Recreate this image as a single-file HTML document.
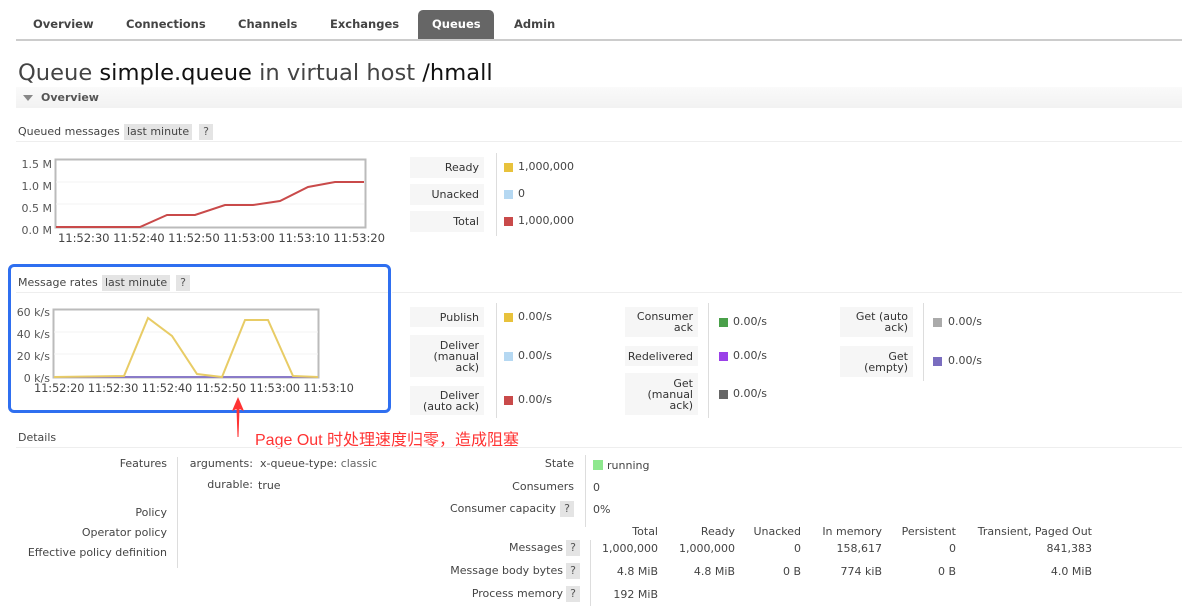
<!DOCTYPE html>
<html><head><meta charset="utf-8"><style>
*{margin:0;padding:0;box-sizing:border-box}
body{width:1182px;height:606px;background:#fff;position:relative;overflow:hidden;font-family:"DejaVu Sans","Liberation Sans","Noto Sans CJK SC",sans-serif;font-size:11px;color:#444}
.a{position:absolute;white-space:nowrap}
.r{text-align:right}
.tab{position:absolute;top:17px;font-weight:bold;font-size:11.5px;color:#444}
.lb{position:absolute;background:#f6f6f6;text-align:right;padding-right:5px;font-size:11px;line-height:11px;color:#333;display:flex;flex-direction:column;justify-content:center;align-items:flex-end}
.sw{position:absolute;width:9px;height:9px}
.q{position:absolute;background:#e4e4e4;width:14px;height:16px;text-align:center;line-height:16px;color:#555}
.hl{position:absolute;height:1px;background:#eee}
.vl{position:absolute;width:1px;background:#ddd}
</style></head><body>
<div class="tab" style="left:33px">Overview</div>
<div class="tab" style="left:126px">Connections</div>
<div class="tab" style="left:238px">Channels</div>
<div class="tab" style="left:330px">Exchanges</div>
<div class="a" style="left:418px;top:10px;width:76px;height:30px;background:#666;border-radius:5px 5px 0 0"></div>
<div class="tab" style="left:432px;color:#fff">Queues</div>
<div class="tab" style="left:514px">Admin</div>
<div class="a" style="left:16px;top:39px;width:1166px;height:2px;background:#ccc"></div>

<div class="a" style="left:18px;top:60px;font-size:22.6px;color:#444">Queue <span style="color:#111">simple.queue</span> in virtual host <span style="color:#111">/hmall</span></div>
<div class="a" style="left:16px;top:87px;width:1166px;height:21px;background:linear-gradient(#fafafa,#f2f2f2)"></div>
<div class="a" style="left:23px;top:95px;width:0;height:0;border-left:5px solid transparent;border-right:5px solid transparent;border-top:6px solid #888"></div>
<div class="a" style="left:41px;top:91px;font-weight:bold;color:#555">Overview</div>

<div class="a" style="left:18px;top:125px">Queued messages</div>
<div class="a" style="left:124px;top:124px;background:#e4e4e4;padding:1px 3px;height:16px">last minute</div>
<div class="q" style="left:199px;top:124px">?</div>
<div class="hl" style="left:16px;top:141px;width:1166px"></div>

<svg class="a" style="left:0;top:0" width="400" height="250">
<rect x="55.5" y="159.5" width="310" height="68" fill="#fff" stroke="#bbb" stroke-width="2"/>
<line x1="56" y1="182" x2="364" y2="182" stroke="#f3f3f3"/><line x1="56" y1="204" x2="364" y2="204" stroke="#f3f3f3"/>
<polyline fill="none" stroke="#c94a4a" stroke-width="2" points="56,227 140,227 167,215 195,215 225,205 253,205 280,201 308,187 335,182 364,182"/>
</svg>
<div class="a r" style="left:4px;top:154px;width:48px;line-height:22px;color:#555">1.5 M<br>1.0 M<br>0.5 M<br>0.0 M</div>
<div class="a" style="left:58px;top:231px;font-size:11.65px;color:#444;letter-spacing:-.1px">11:52:30 11:52:40 11:52:50 11:53:00 11:53:10 11:53:20</div>

<div class="lb" style="left:410px;top:157px;width:74px;height:21px">Ready</div>
<div class="lb" style="left:410px;top:184px;width:74px;height:21px">Unacked</div>
<div class="lb" style="left:410px;top:211px;width:74px;height:21px">Total</div>
<div class="vl" style="left:496px;top:153px;height:83px"></div>
<div class="sw" style="left:504px;top:163px;background:#e8c23c"></div><div class="a" style="left:518px;top:160px">1,000,000</div>
<div class="sw" style="left:504px;top:190px;background:#b5d8f2"></div><div class="a" style="left:518px;top:187px">0</div>
<div class="sw" style="left:504px;top:217px;background:#c94a4a"></div><div class="a" style="left:518px;top:214px">1,000,000</div>

<div class="a" style="left:8px;top:264px;width:383px;height:149px;border:3px solid #2f6ff0;border-radius:6px"></div>
<div class="a" style="left:18px;top:276px">Message rates</div>
<div class="a" style="left:102px;top:275px;background:#e4e4e4;padding:1px 3px;height:16px">last minute</div>
<div class="q" style="left:176px;top:275px">?</div>
<div class="hl" style="left:392px;top:292px;width:790px"></div>
<div class="hl" style="left:16px;top:292px;width:372px"></div>

<svg class="a" style="left:0;top:0" width="400" height="400">
<rect x="53.5" y="309.5" width="265" height="68" fill="#fff" stroke="#bbb" stroke-width="2"/>
<line x1="54" y1="332" x2="318" y2="332" stroke="#f3f3f3"/><line x1="54" y1="354" x2="318" y2="354" stroke="#f3f3f3"/>
<line x1="54" y1="377" x2="318" y2="377" stroke="#8a7bc8" stroke-width="2"/>
<polyline fill="none" stroke="#e8cc66" stroke-width="2" points="54,377 124,376 148,318 172,336 197,374 222,377 245,320 268,320 293,376 318,377"/>
</svg>
<div class="a r" style="left:2px;top:302px;width:48px;line-height:22px;color:#555">60 k/s<br>40 k/s<br>20 k/s<br>0 k/s</div>
<div class="a" style="left:34px;top:381px;font-size:11.4px;color:#444;letter-spacing:-.1px">11:52:20 11:52:30 11:52:40 11:52:50 11:53:00 11:53:10</div>

<div class="lb" style="left:410px;top:307px;width:74px;height:20px">Publish</div>
<div class="lb" style="left:410px;top:335px;width:74px;height:42px">Deliver<br>(manual<br>ack)</div>
<div class="lb" style="left:410px;top:386px;width:74px;height:29px">Deliver<br>(auto ack)</div>
<div class="vl" style="left:496px;top:303px;height:115px"></div>
<div class="sw" style="left:504px;top:313px;background:#e8c23c"></div><div class="a" style="left:518px;top:310px">0.00/s</div>
<div class="sw" style="left:504px;top:352px;background:#b5d8f2"></div><div class="a" style="left:518px;top:349px">0.00/s</div>
<div class="sw" style="left:504px;top:396px;background:#c94a4a"></div><div class="a" style="left:518px;top:393px">0.00/s</div>

<div class="lb" style="left:625px;top:307px;width:73px;height:30px">Consumer<br>ack</div>
<div class="lb" style="left:625px;top:346px;width:73px;height:20px">Redelivered</div>
<div class="lb" style="left:625px;top:373px;width:73px;height:42px">Get<br>(manual<br>ack)</div>
<div class="vl" style="left:708px;top:303px;height:115px"></div>
<div class="sw" style="left:719px;top:318px;background:#4aa04a"></div><div class="a" style="left:733px;top:315px">0.00/s</div>
<div class="sw" style="left:719px;top:352px;background:#9a40e8"></div><div class="a" style="left:733px;top:349px">0.00/s</div>
<div class="sw" style="left:719px;top:390px;background:#666"></div><div class="a" style="left:733px;top:387px">0.00/s</div>

<div class="lb" style="left:840px;top:307px;width:73px;height:30px">Get (auto<br>ack)</div>
<div class="lb" style="left:840px;top:346px;width:73px;height:31px">Get<br>(empty)</div>
<div class="vl" style="left:923px;top:303px;height:78px"></div>
<div class="sw" style="left:933px;top:318px;background:#aaa"></div><div class="a" style="left:948px;top:315px">0.00/s</div>
<div class="sw" style="left:933px;top:357px;background:#7a6dbf"></div><div class="a" style="left:948px;top:354px">0.00/s</div>

<svg class="a" style="left:228px;top:395px" width="20" height="44"><path d="M10 2 L16 16 L11.5 14 L10.5 42 L9.5 42 L8.5 14 L4 16 Z" fill="#f33"/></svg>
<div class="a" style="left:255px;top:426px;font-size:16px;color:#f33;font-family:'Liberation Sans','Noto Sans CJK SC',sans-serif">Page Out 时处理速度归零，造成阻塞</div>

<div class="a" style="left:18px;top:431px">Details</div>
<div class="hl" style="left:16px;top:447px;width:1166px"></div>

<div class="a r" style="left:0;top:457px;width:167px">Features</div>
<div class="a r" style="left:0;top:506px;width:167px">Policy</div>
<div class="a r" style="left:0;top:526px;width:167px">Operator policy</div>
<div class="a r" style="left:0;top:546px;width:167px">Effective policy definition</div>
<div class="vl" style="left:177px;top:457px;height:111px"></div>
<div class="a r" style="left:150px;top:457px;width:103px">arguments:</div>
<div class="a" style="left:260px;top:457px">x-queue-type: <span style="color:#666">classic</span></div>
<div class="a r" style="left:150px;top:478px;width:103px">durable:</div>
<div class="a" style="left:258px;top:479px">true</div>

<div class="a r" style="left:400px;top:457px;width:174px">State</div>
<div class="a r" style="left:400px;top:480px;width:174px">Consumers</div>
<div class="a r" style="left:400px;top:502px;width:156px">Consumer capacity</div>
<div class="q" style="left:560px;top:501px">?</div>
<div class="vl" style="left:585px;top:455px;height:72px"></div>
<div class="sw" style="left:593px;top:460px;background:#8ee88e;width:10px;height:10px"></div><div class="a" style="left:607px;top:459px">running</div>
<div class="a" style="left:593px;top:481px">0</div>
<div class="a" style="left:593px;top:503px">0%</div>

<div class="a r" style="left:580px;top:525px;width:78px">Total</div>
<div class="a r" style="left:660px;top:525px;width:75px">Ready</div>
<div class="a r" style="left:740px;top:525px;width:61px">Unacked</div>
<div class="a r" style="left:800px;top:525px;width:82px">In memory</div>
<div class="a r" style="left:880px;top:525px;width:76px">Persistent</div>
<div class="a r" style="left:960px;top:525px;width:132px">Transient, Paged Out</div>

<div class="a r" style="left:400px;top:541px;width:163px">Messages</div><div class="q" style="left:566px;top:540px">?</div>
<div class="a r" style="left:400px;top:564px;width:163px">Message body bytes</div><div class="q" style="left:566px;top:563px">?</div>
<div class="a r" style="left:400px;top:587px;width:163px">Process memory</div><div class="q" style="left:566px;top:586px">?</div>
<div class="vl" style="left:590px;top:540px;height:66px"></div>

<div class="a r" style="left:580px;top:542px;width:78px">1,000,000</div>
<div class="a r" style="left:660px;top:542px;width:75px">1,000,000</div>
<div class="a r" style="left:740px;top:542px;width:61px">0</div>
<div class="a r" style="left:800px;top:542px;width:82px">158,617</div>
<div class="a r" style="left:880px;top:542px;width:76px">0</div>
<div class="a r" style="left:960px;top:542px;width:132px">841,383</div>

<div class="a r" style="left:580px;top:565px;width:78px">4.8 MiB</div>
<div class="a r" style="left:660px;top:565px;width:75px">4.8 MiB</div>
<div class="a r" style="left:740px;top:565px;width:61px">0 B</div>
<div class="a r" style="left:800px;top:565px;width:82px">774 kiB</div>
<div class="a r" style="left:880px;top:565px;width:76px">0 B</div>
<div class="a r" style="left:960px;top:565px;width:132px">4.0 MiB</div>

<div class="a r" style="left:580px;top:588px;width:78px">192 MiB</div>
</body></html>
